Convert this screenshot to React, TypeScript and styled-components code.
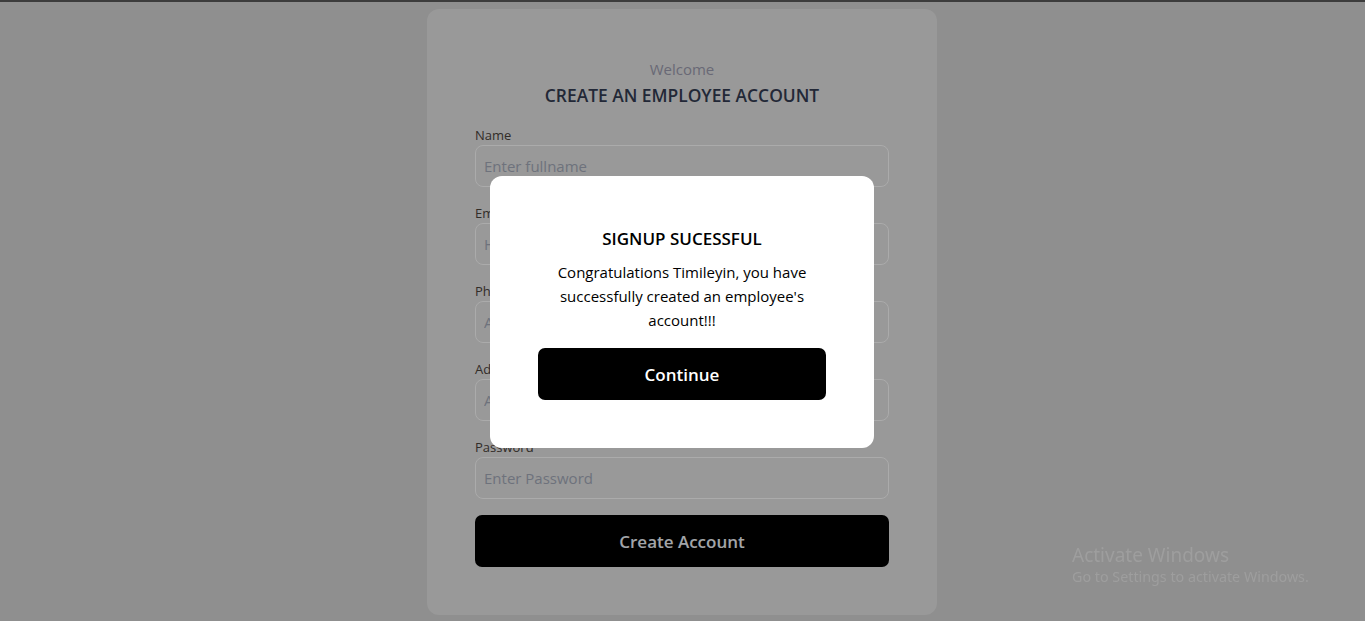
import React from 'react'
import styled, { createGlobalStyle } from 'styled-components'

const GlobalStyle = createGlobalStyle`
  html, body {
    margin: 0;
    padding: 0;
  }
  body {
    background: #d5d5d5;
    border-top: 2px solid #5a5a5a;
    font-family: "Open Sans", "Noto Sans", Arial, sans-serif;
    overflow: hidden;
  }
  * {
    box-sizing: border-box;
  }
`

const Page = styled.div`
  height: 619px;
  display: flex;
  justify-content: center;
  padding: 7px 1px 0 0;
`

const Card = styled.form`
  width: 510px;
  height: 606px;
  background: #e4e4e4;
  border-radius: 12px;
  padding: 48px 48px 48px;
  display: flex;
  flex-direction: column;
`

const Welcome = styled.p`
  margin: 0;
  text-align: center;
  font-size: 15px;
  line-height: 24px;
  color: #9d9db0;
`

const Title = styled.h1`
  margin: 1px 0 17px;
  text-align: center;
  font-size: 17.4px;
  line-height: 26px;
  font-weight: 600;
  color: #343c52;
`

const Field = styled.div`
  display: flex;
  flex-direction: column;
  margin-bottom: 16px;
`

const Label = styled.label`
  font-size: 13px;
  line-height: 20px;
  color: #4b433c;
`

const Input = styled.input`
  height: 42px;
  width: 100%;
  border: 1px solid #ffffff;
  border-radius: 8px;
  background: transparent;
  padding: 0 8px;
  font-family: inherit;
  font-size: 15px;
  outline: none;
  &::placeholder {
    color: #a4abba;
  }
`

const Button = styled.button<{ $muted?: boolean }>`
  height: 52px;
  width: 100%;
  border: none;
  border-radius: 7px;
  background: #000;
  color: ${(p) => (p.$muted ? '#f2f6fc' : '#fff')};
  font-family: inherit;
  font-size: 17px;
  font-weight: 600;
  cursor: pointer;
`

const Overlay = styled.div`
  position: fixed;
  inset: 0;
  background: rgba(0, 0, 0, 0.33);
  display: flex;
  justify-content: center;
  padding: 176px 1px 0 0;
`

const Modal = styled.div`
  width: 384px;
  height: 272px;
  background: #fff;
  border-radius: 12px;
  padding: 48px;
  display: flex;
  flex-direction: column;
  align-items: center;
`

const ModalTitle = styled.h2`
  margin: 1px 0 7px;
  font-size: 17px;
  line-height: 28px;
  font-weight: 600;
  color: #000;
`

const ModalText = styled.p`
  margin: 0 0 16px;
  text-align: center;
  font-size: 15px;
  line-height: 24px;
  color: #000;
`

const Watermark = styled.div`
  position: fixed;
  left: 1072px;
  top: 543px;
  color: #9e9e9e;
  font-family: "Noto Sans", "Open Sans", sans-serif;
`

const WatermarkTitle = styled.div`
  font-size: 19px;
  line-height: 24px;
`

const WatermarkText = styled.div`
  font-size: 14.3px;
  line-height: 20px;
`

const fields = [
  { label: 'Name', placeholder: 'Enter fullname', type: 'text' },
  { label: 'Email', placeholder: 'Hello@gmail.com', type: 'email' },
  { label: 'Phone Number', placeholder: 'Add Phone Number', type: 'tel' },
  { label: 'Address', placeholder: 'Add Address', type: 'text' },
  { label: 'Password', placeholder: 'Enter Password', type: 'password' },
]

export default function App() {
  return (
    <>
      <GlobalStyle />
      <Page>
        <Card onSubmit={(e) => e.preventDefault()}>
          <Welcome>Welcome</Welcome>
          <Title>CREATE AN EMPLOYEE ACCOUNT</Title>
          {fields.map((f) => (
            <Field key={f.label}>
              <Label>{f.label}</Label>
              <Input type={f.type} placeholder={f.placeholder} />
            </Field>
          ))}
          <Button $muted type="submit">Create Account</Button>
        </Card>
      </Page>
      <Overlay>
        <Modal>
          <ModalTitle>SIGNUP SUCESSFUL</ModalTitle>
          <ModalText>
            Congratulations Timileyin, you have successfully created an employee's account!!!
          </ModalText>
          <Button>Continue</Button>
        </Modal>
      </Overlay>
      <Watermark>
        <WatermarkTitle>Activate Windows</WatermarkTitle>
        <WatermarkText>Go to Settings to activate Windows.</WatermarkText>
      </Watermark>
    </>
  )
}
